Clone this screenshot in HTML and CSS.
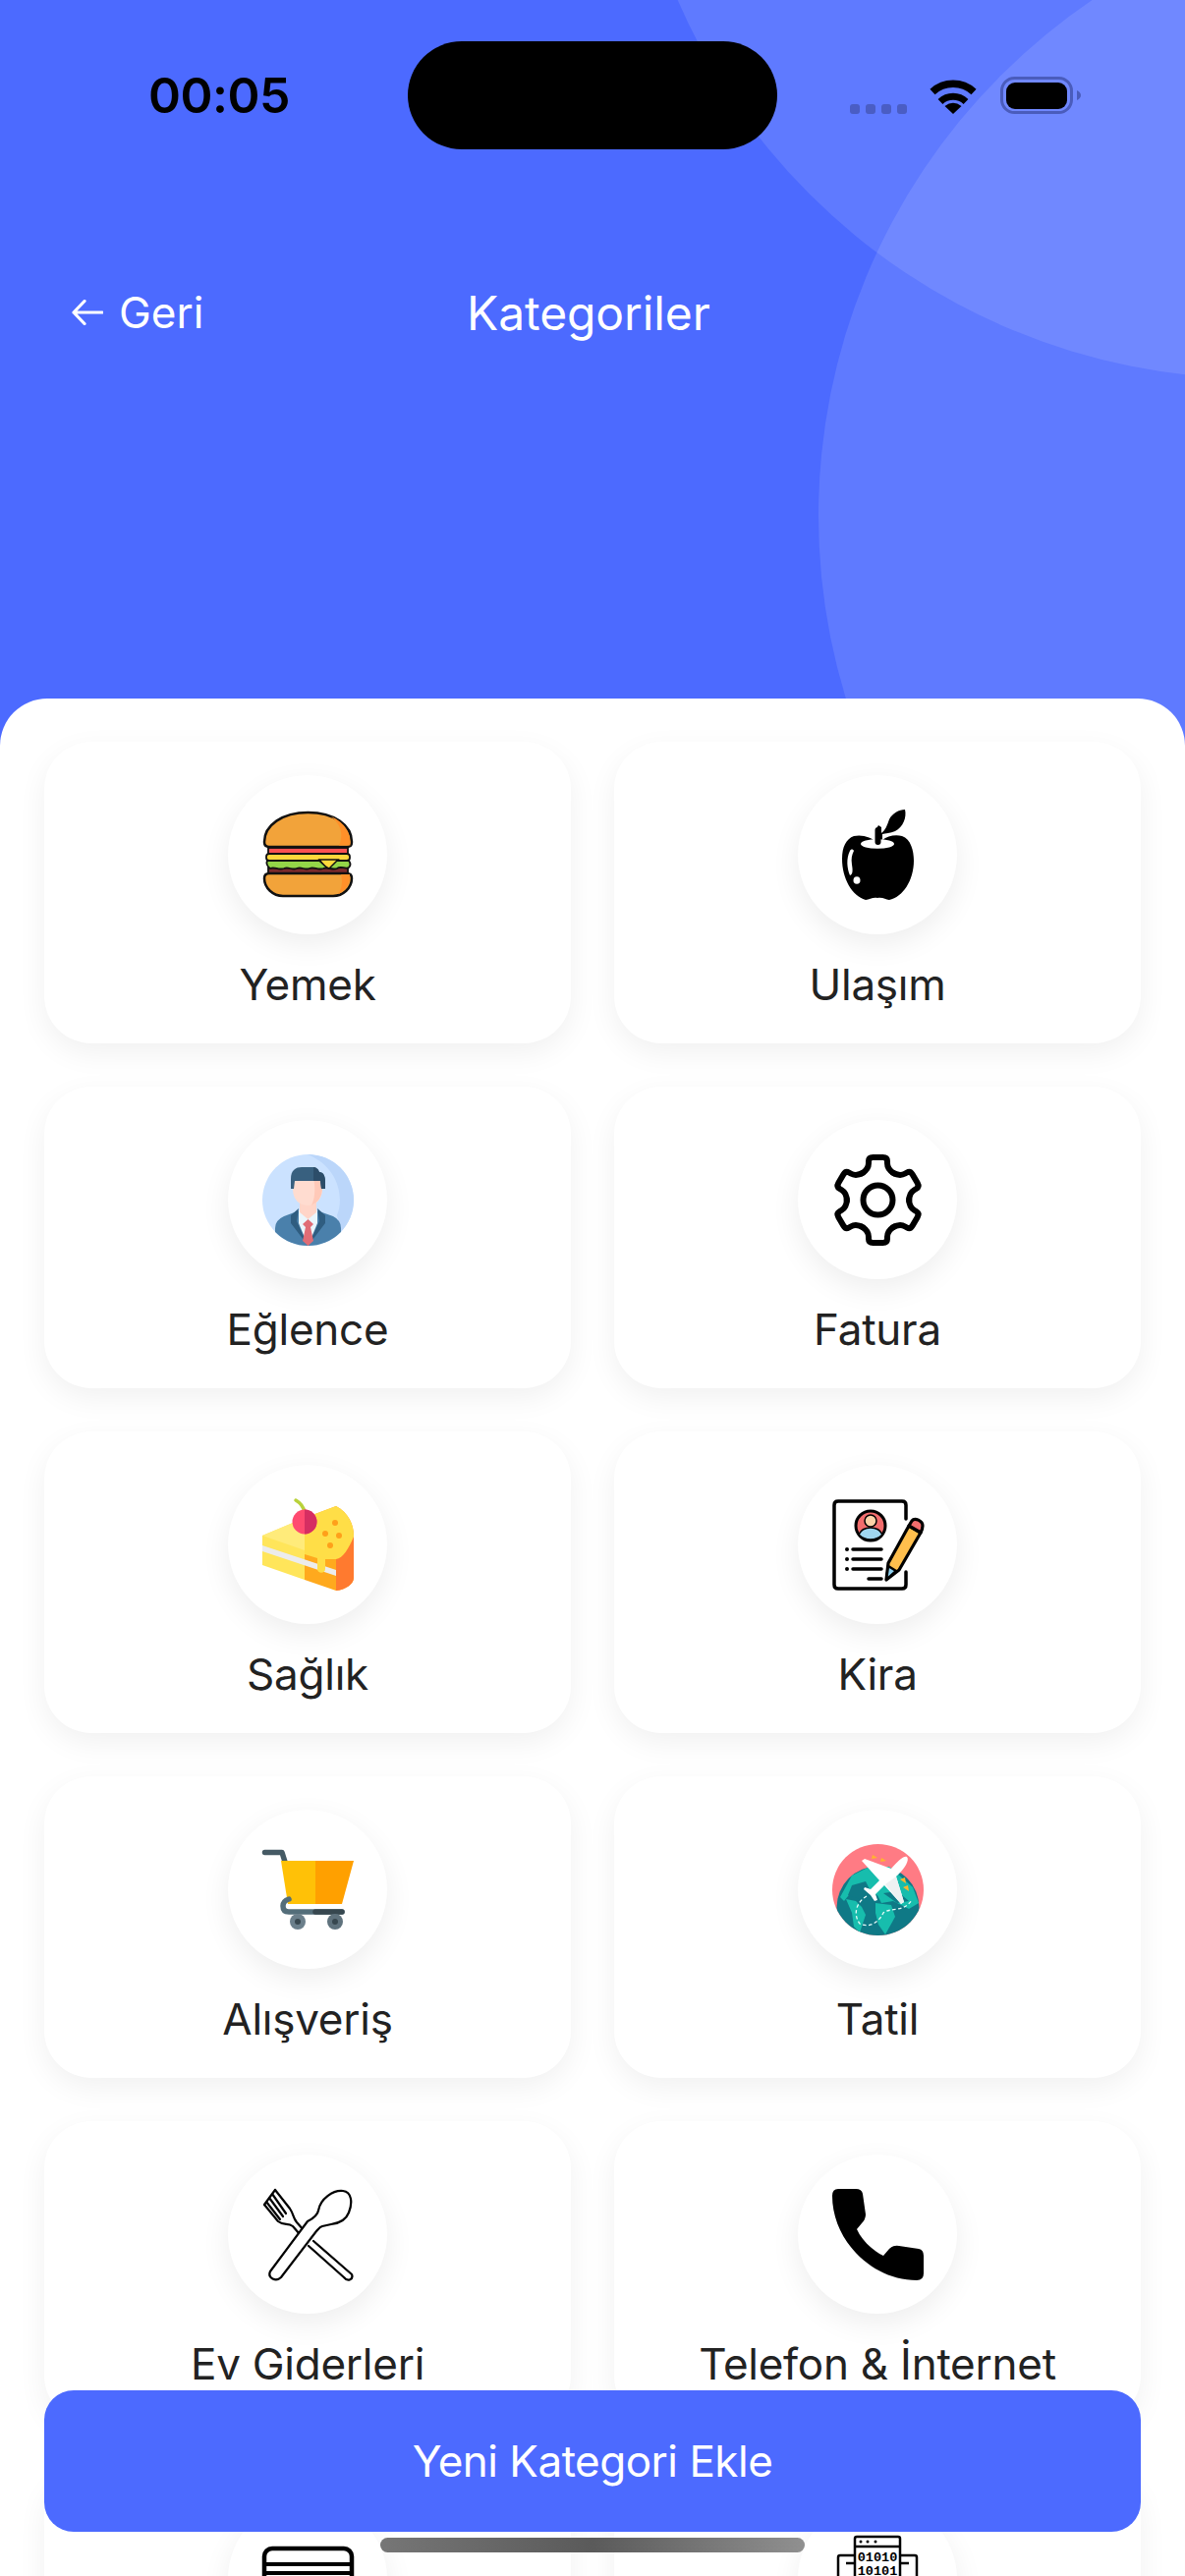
FILE: index.html
```html
<!DOCTYPE html>
<html lang="tr">
<head>
<meta charset="utf-8">
<title>Kategoriler</title>
<link rel="stylesheet" href="styles.css">
</head>
<body>
<div class="screen">
  <div class="blob blob-one"></div>
  <div class="blob blob-two"></div>

  <header class="top">
    <div class="status">
      <span class="time">00:05</span>
      <span class="island"></span>
      <span class="signal"><i></i><i></i><i></i><i></i></span>
      <svg class="wifi" viewBox="0 0 50 37"><path d="M4 14.500A31 31 0 0 1 46 14.500" fill="none" stroke="#000" stroke-width="7.500"/><path d="M12 24.500A19 19 0 0 1 38 24.500" fill="none" stroke="#000" stroke-width="7"/><path d="M25 37L16.500 29Q25 22.500 33.500 29Z" fill="#000"/></svg>
      <svg class="battery" viewBox="0 0 82 38"><rect x="1.500" y="1.500" width="71" height="35" rx="13" fill="none" stroke="#4a5cbc" stroke-width="3"/><rect x="6" y="6" width="62" height="27" rx="9" fill="#000"/><path d="M78 14Q82 16 82 19Q82 22 78 24Z" fill="#4a5cbc"/></svg>
    </div>
    <nav class="nav">
      <span class="back">
        <svg class="arrow" viewBox="0 0 32 26"><path d="M31 13H2M13 1.500L2 13L13 24.500" fill="none" stroke="#fff" stroke-width="3.200" stroke-linecap="round" stroke-linejoin="round"/></svg>
        <span>Geri</span>
      </span>
      <span class="title">Kategoriler</span>
    </nav>
  </header>

  <main class="sheet">
    <div class="grid">

      <article class="card">
        <div class="disc">
          <svg class="icon" viewBox="0 -2 93 93">
            <path d="M2 31C2 14 20 1 46.500 1S91 14 91 31Q91 36 86 36H7Q2 36 2 31Z" fill="#f2a33a" stroke="#111" stroke-width="2.500"/>
            <path d="M70 5C84 11 90 22 89.500 34.500H78C83 24 80 13 70 5Z" fill="#ff9029"/>
            <rect x="6" y="37" width="81" height="6" fill="#fb5252" stroke="#111" stroke-width="1.800"/>
            <rect x="4" y="43" width="85" height="7" rx="3" fill="#ffd83b" stroke="#111" stroke-width="1.800"/>
            <rect x="6" y="57" width="81" height="6" fill="#7b2a2c" stroke="#111" stroke-width="1.800"/>
            <path d="M5 50H58L67 57L74 50H88Q91 54 88 57C84 59 80 55 76 58C71 60 67 56 62 58C56 60 53 56 48 58C43 60 40 56 35 58C30 60 27 56 22 58C16 60 13 56 8 58Q3 54 5 50Z" fill="#94d648" stroke="#111" stroke-width="1.800"/>
            <path d="M58 49H77L68 58Q64 57 58 49Z" fill="#ffd83b" stroke="#111" stroke-width="1.500"/>
            <path d="M2 68Q2 63 7 63H86Q91 63 91 68C91 78 82 86 72 86H21C11 86 2 78 2 68Z" fill="#f2a33a" stroke="#111" stroke-width="2.500"/>
            <path d="M80 64H89C90 73 85 81 77 84C81 78 82 71 80 64Z" fill="#ff9029"/>
          </svg>
        </div>
        <h2 class="label">Yemek</h2>
      </article>

      <article class="card">
        <div class="disc">
          <svg class="icon" viewBox="0 0 93 93">
            <path d="M46 34C43 27 44 20 47 16L50 18V24C54 21 56 16 58 10C61 4 68 0 74 0C76 8 72 18 64 22C59 24 54 24 51 25V31C56 27 64 25 71 27C80 30 83 42 83 52C83 72 72 89 58 92C54 92 52 89 46 90C41 89 38 92 34 92C20 88 10 70 10 50C10 38 14 30 22 27C30 25 40 28 46 34Z" fill="#000"/>
            <ellipse cx="46" cy="35" rx="17" ry="4.800" fill="#fff"/>
            <rect x="43.500" y="18" width="6" height="18" rx="3" fill="#000"/>
            <path d="M18 42C14 50 15 60 18 67C21 66 21 62 20 56C19 50 20 46 22 42C21 40 19 40 18 42Z" fill="#fff"/>
            <ellipse cx="25" cy="72" rx="3.500" ry="3.800" fill="#fff"/>
          </svg>
        </div>
        <h2 class="label">Ulaşım</h2>
      </article>

      <article class="card">
        <div class="disc">
          <svg class="icon" viewBox="0 0 93 93">
            <defs><clipPath id="clip-man"><circle cx="46.500" cy="46.500" r="46.500"/></clipPath></defs>
            <g clip-path="url(#clip-man)">
              <rect width="93" height="93" fill="#cbe2ff"/>
              <path d="M46 0A46.500 46.500 0 0 1 80 80L76 62C84 42 76 12 46 0Z" fill="#bbd6fa"/>
              <path d="M13 93V75Q13 67 22 63L38 57H55L72 63Q80 67 80 75V93Z" fill="#4a80ab"/>
              <path d="M37 57H56V70L46.500 93L37 70Z" fill="#eaf6fc"/>
              <path d="M37 55L29 62V70L46.500 93L35 68ZM56 55L64 62V70L46.500 93L58 68Z" fill="#2f5d80"/>
              <path d="M38 49H55V59L46.500 66L38 59Z" fill="#ffd5c8"/>
              <path d="M46.500 66L52 71L49 74L52 88L46.500 93L41 88L44 74L41 71Z" fill="#e06d76"/>
              <path d="M31 24H61V36Q60 51 46 52Q32 51 31 36Z" fill="#ffdcd0"/>
              <path d="M52 24H61V36Q60 47 50 52C54 44 54 32 52 24Z" fill="#ffc9b8"/>
              <path d="M29 25C29 16 34 13 40 13H51C55 13 57 15 58 18C62 18 64 22 64 28V35H60L59 27H33L32 35H29Z" fill="#38607f"/>
              <path d="M52 13H51C55 13 57 15 58 18C62 18 64 22 64 28V35H60L59 27H52Z" fill="#2c4d69"/>
            </g>
          </svg>
        </div>
        <h2 class="label">Eğlence</h2>
      </article>

      <article class="card">
        <div class="disc">
          <svg class="icon" viewBox="-46.500 -46.500 93 93">
            <defs><path id="gear-tooth" d="M-16.500-27C-11.500-30-9.500-33-9.500-37.500V-39.500Q-9.500-43.500-5-43.500H5Q9.500-43.500 9.500-39.500V-37.500C9.500-33 11.500-30 16.500-27" fill="none" stroke="#000" stroke-width="6" stroke-linecap="round"/></defs>
            <use href="#gear-tooth"/>
            <use href="#gear-tooth" transform="rotate(60)"/>
            <use href="#gear-tooth" transform="rotate(120)"/>
            <use href="#gear-tooth" transform="rotate(180)"/>
            <use href="#gear-tooth" transform="rotate(240)"/>
            <use href="#gear-tooth" transform="rotate(300)"/>
            <circle r="15" fill="none" stroke="#000" stroke-width="6"/>
          </svg>
        </div>
        <h2 class="label">Fatura</h2>
      </article>

      <article class="card">
        <div class="disc">
          <svg class="icon" viewBox="0 0 93 93">
            <path d="M0 37L43 19V82L0 67Z" fill="#ffe55a"/>
            <path d="M0 37L43 19V52Z" fill="#ffeb7a"/>
            <path d="M43 19L75 7C88 14 93 26 93 37V80C93 86 85 92 75 93L43 82Z" fill="#ffa91d"/>
            <path d="M75 32L93 37V80C93 86 85 92 75 93Z" fill="#ff7a2f"/>
            <path d="M0 47L75 72V78L0 53Z" fill="#ececec"/>
            <path d="M43 19L75 7C88 14 93 26 93 38C88 50 82 60 75 61H64V71C64 76 56 76 56 71V60L43 56Z" fill="#ffde47"/>
            <circle cx="74" cy="24" r="3" fill="#ffa01a"/><circle cx="64" cy="35" r="3" fill="#ffa01a"/><circle cx="78" cy="37" r="3" fill="#ffa01a"/><circle cx="69" cy="47" r="3" fill="#ffa01a"/>
            <path d="M34 1Q41 5 43 13" fill="none" stroke="#b9d23a" stroke-width="3.500" stroke-linecap="round"/>
            <circle cx="43" cy="23" r="12.500" fill="#ff4a70"/>
            <path d="M43 10.500A12.500 12.500 0 0 1 43 35.500Z" fill="#d62e62"/>
          </svg>
        </div>
        <h2 class="label">Sağlık</h2>
      </article>

      <article class="card">
        <div class="disc">
          <svg class="icon" viewBox="0 0 93 93">
            <path d="M75 20V6Q75 2 71 2H6Q2 2 2 6V87Q2 91 6 91H71Q75 91 75 87V74" fill="#fff" stroke="#000" stroke-width="3.500" stroke-linecap="round"/>
            <circle cx="39" cy="27" r="15" fill="#f26d6d" stroke="#000" stroke-width="3"/>
            <path d="M27 36Q30 29 39 29Q48 29 51 36Q46 41 39 41Q32 41 27 36Z" fill="#9fd6ef" stroke="#000" stroke-width="1.500"/>
            <circle cx="39" cy="22" r="6" fill="#fcd2a8" stroke="#000" stroke-width="1.500"/>
            <path d="M21 51H50M21 61H50M21 71H50M37 81H50" fill="none" stroke="#000" stroke-width="3.500" stroke-linecap="round"/>
            <circle cx="15" cy="51" r="2" fill="#000"/><circle cx="15" cy="61" r="2" fill="#000"/><circle cx="15" cy="71" r="2" fill="#000"/>
            <path d="M55 82L57 65L78 27L90 34L68 72Z" fill="#ffbf4d" stroke="#000" stroke-width="3.200" stroke-linejoin="round"/>
            <path d="M78 27L81 22C84 18 92 22 92 27Q92 30 90 34Z" fill="#f26d6d" stroke="#000" stroke-width="3.200" stroke-linejoin="round"/>
            <path d="M55 82L57 68L65 73Z" fill="#8fd1f0" stroke="#000" stroke-width="2.500" stroke-linejoin="round"/>
          </svg>
        </div>
        <h2 class="label">Kira</h2>
      </article>

      <article class="card">
        <div class="disc">
          <svg class="icon" viewBox="0 0 93 93">
            <path d="M2.500 8.500H20L23 18" fill="none" stroke="#455a64" stroke-width="5.500" stroke-linecap="round" stroke-linejoin="round"/>
            <path d="M19 17H54V61H26Z" fill="#ffc107"/>
            <path d="M54 17H93L81 61H54Z" fill="#ffa000"/>
            <path d="M27 56Q21 58 21 63Q21 69 27 69H81" fill="none" stroke="#546e7a" stroke-width="5.500" stroke-linecap="round"/>
            <path d="M54 69H81" fill="none" stroke="#37474f" stroke-width="5.500" stroke-linecap="round"/>
            <circle cx="36" cy="79" r="8" fill="#6b7f8b"/><circle cx="36" cy="79" r="3" fill="#37474f"/>
            <circle cx="74" cy="79" r="8" fill="#5f727d"/><circle cx="74" cy="79" r="3" fill="#37474f"/>
          </svg>
        </div>
        <h2 class="label">Alışveriş</h2>
      </article>

      <article class="card">
        <div class="disc">
          <svg class="icon" viewBox="0 0 93 93">
            <defs><clipPath id="clip-globe"><circle cx="46.500" cy="46.500" r="46.500"/></clipPath></defs>
            <g clip-path="url(#clip-globe)">
              <rect width="93" height="93" fill="#ff7b84"/>
              <circle cx="46.500" cy="64.500" r="42" fill="#0f7986"/>
              <path d="M36 24L58 23L82 44L88 60L78 66L62 58L50 60L46 52L33 46L20 48L12 58L8 54L20 32Z" fill="#17bdad"/>
              <path d="M14 56L24 58L30 64L34 72L28 90L22 84L20 70Z" fill="#17bdad"/>
              <path d="M44 60L60 62L64 74L54 92L47 82L44 70Z" fill="#17bdad"/>
              <path d="M20 42L34 38L38 46L28 56L16 52Z" fill="#0f7986"/>
              <path d="M52 50L66 48L78 58L66 60Z" fill="#0f7986"/>
              <path d="M35 53C26 58 20 70 28 81C36 85 46 82 52 70C60 64 72 70 81 57" fill="none" stroke="#e9fbf9" stroke-width="1.300" stroke-dasharray="3.500 2.500"/>
              <path d="M41 11L46 14L40 15ZM50 14L55 17L49 18ZM69 36L74 34L75 40ZM72 44L77 42L78 48Z" fill="#ffb42e"/>
              <path d="M76 13C79 16 74 25 65 33L73 59L70 61L53 42L44 51L46 57L43 58L39 52L32 46L33 44L39 46L48 37L30 17L33 15L60 25C66 18 73 11 76 13Z" fill="#fff"/>
              <path d="M54 41L65 33L73 59L70 61Z" fill="#eef1f2"/>
            </g>
          </svg>
        </div>
        <h2 class="label">Tatil</h2>
      </article>

      <article class="card">
        <div class="disc">
          <svg class="icon" viewBox="0 0 93 93">
            <g fill="none" stroke="#000" stroke-width="2.200" stroke-linejoin="round" stroke-linecap="round">
              <path d="M52 53L91 87C93 92 87 95 83 90L47 58"/>
              <path d="M13 1L28 20C32 26 31 29 35 34L42 42M2 16L16 33C22 38 26 34 31 38L37 45"/>
              <path d="M13 1L2 16M10 5L24 25M7 9L21 28M4 13L18 31"/>
              <path d="M8 84L46 33C50 31 56 28 57 22C59 10 72 1 82 2C91 3 92 14 88 24C85 32 78 35 70 36L61 38C58 39 57 41 55 43L19 90C14 95 5 91 8 84Z" fill="#fff"/>
            </g>
          </svg>
        </div>
        <h2 class="label">Ev Giderleri</h2>
      </article>

      <article class="card">
        <div class="disc">
          <svg class="icon" viewBox="0 0 93 93">
            <path d="M6 0H24Q30 0 31 5L34 26Q34 31 30 35L25 41C30 52 40 62 52 68L58 61Q62 57 68 58L88 61Q93 62 93 68V86Q93 93 86 93C40 93 0 52 0 7Q0 0 6 0Z" fill="#000"/>
          </svg>
        </div>
        <h2 class="label">Telefon &amp; İnternet</h2>
      </article>

      <article class="card">
        <div class="disc">
          <svg class="icon" viewBox="0 0 93 93">
            <rect x="2" y="15" width="89" height="62" rx="8" fill="#fff" stroke="#000" stroke-width="4.500"/>
            <path d="M2 31H91M2 40H91" stroke="#000" stroke-width="4" fill="none"/>
          </svg>
        </div>
      </article>

      <article class="card">
        <div class="disc">
          <svg class="icon" viewBox="0 0 93 93">
            <path d="M22 22H8Q6 22 6 24V70M70 22H84Q86 22 86 24V70M14 30H22M70 30H78" fill="none" stroke="#000" stroke-width="2.500"/>
            <rect x="23" y="3" width="46" height="70" rx="2" fill="#fff" stroke="#000" stroke-width="2.500"/>
            <path d="M23 13H69" stroke="#000" stroke-width="2.500"/>
            <circle cx="29" cy="8" r="1.500" fill="#000"/><circle cx="36" cy="8" r="1.500" fill="#000"/><circle cx="44" cy="8" r="1.500" fill="#000"/>
            <text class="bits" x="46" y="28" text-anchor="middle">01010</text>
            <text class="bits" x="46" y="42" text-anchor="middle">10101</text>
          </svg>
        </div>
      </article>

    </div>
  </main>

  <button class="add" type="button">Yeni Kategori Ekle</button>
  <div class="home"></div>
</div>
</body>
</html>
```

FILE: styles.css
```css
* {
  box-sizing: border-box;
}

html,
body {
  margin: 0;
  padding: 0;
}

body {
  font-family: Inter, "Liberation Sans", sans-serif;
  background: #4c6aff;
}

.screen {
  position: relative;
  width: 1206px;
  height: 2622px;
  overflow: hidden;
  background: #4c6aff;
}

.blob {
  position: absolute;
  border-radius: 50%;
  background: rgba(255, 255, 255, 0.11);
}

.blob-one {
  left: 637px;
  top: -893px;
  width: 1278px;
  height: 1278px;
}

.blob-two {
  left: 833px;
  top: -109px;
  width: 1268px;
  height: 1268px;
}

.top {
  position: relative;
  height: 711px;
  padding-top: 42px;
}

.status {
  display: flex;
  align-items: center;
  height: 110px;
  padding-left: 151px;
}

.time {
  width: 141px;
  font-size: 50px;
  font-weight: 600;
  line-height: 110px;
  letter-spacing: -0.5px;
  color: #000;
  white-space: nowrap;
}

.island {
  width: 376px;
  height: 110px;
  margin-left: 123px;
  border-radius: 55px;
  background: #000;
}

.signal {
  display: flex;
  gap: 6px;
  align-self: flex-end;
  margin-left: 74px;
  margin-bottom: 36px;
}

.signal i {
  width: 10px;
  height: 10px;
  border-radius: 3px;
  background: #4a5dc4;
}

.wifi {
  width: 50px;
  height: 37px;
  margin-left: 22px;
}

.battery {
  width: 82px;
  height: 38px;
  margin-left: 23px;
}

.nav {
  display: flex;
  align-items: center;
  height: 60px;
  margin-top: 136px;
  padding-left: 73px;
  color: #fff;
}

.back {
  display: flex;
  flex: 0 0 402px;
  align-items: center;
  gap: 16px;
  font-size: 44px;
}

.arrow {
  width: 32px;
  height: 26px;
}

.title {
  font-size: 48px;
  letter-spacing: -0.1px;
  white-space: nowrap;
}

.sheet {
  position: relative;
  height: 1911px;
  padding: 44px 45px 0;
  overflow: hidden;
  border-radius: 48px 48px 0 0;
  background: #fff;
}

.grid {
  display: grid;
  grid-template-columns: 536px 536px;
  grid-auto-rows: 307px;
  gap: 44px;
}

.card {
  display: flex;
  flex-direction: column;
  align-items: center;
  padding-top: 34px;
  border-radius: 48px;
  background: #fff;
  box-shadow: 0 10px 30px rgba(0, 0, 0, 0.06);
}

.disc {
  display: flex;
  flex: none;
  align-items: center;
  justify-content: center;
  width: 162px;
  height: 162px;
  border-radius: 50%;
  background: #fff;
  box-shadow: 0 10px 30px rgba(0, 0, 0, 0.07);
}

.icon {
  display: block;
  width: 93px;
  height: 93px;
  overflow: visible;
}

.bits {
  font-family: "Liberation Mono", monospace;
  font-size: 13.500px;
  font-weight: 700;
}

.label {
  margin: 24px 0 0;
  font-size: 44px;
  font-weight: 400;
  line-height: 54px;
  letter-spacing: -0.25px;
  color: #222;
  white-space: nowrap;
}

.add {
  position: absolute;
  left: 45px;
  top: 2433px;
  width: 1116px;
  height: 144px;
  padding: 0;
  border: 0;
  border-radius: 30px;
  background: #4c6aff;
  color: #fff;
  font-family: inherit;
  font-size: 44px;
  font-weight: 400;
  letter-spacing: -0.5px;
}

.home {
  position: absolute;
  left: 387px;
  top: 2583px;
  width: 432px;
  height: 15px;
  border-radius: 8px;
  background: linear-gradient(90deg, #767676, #5a5a5a 50%, #909090);
}
```
